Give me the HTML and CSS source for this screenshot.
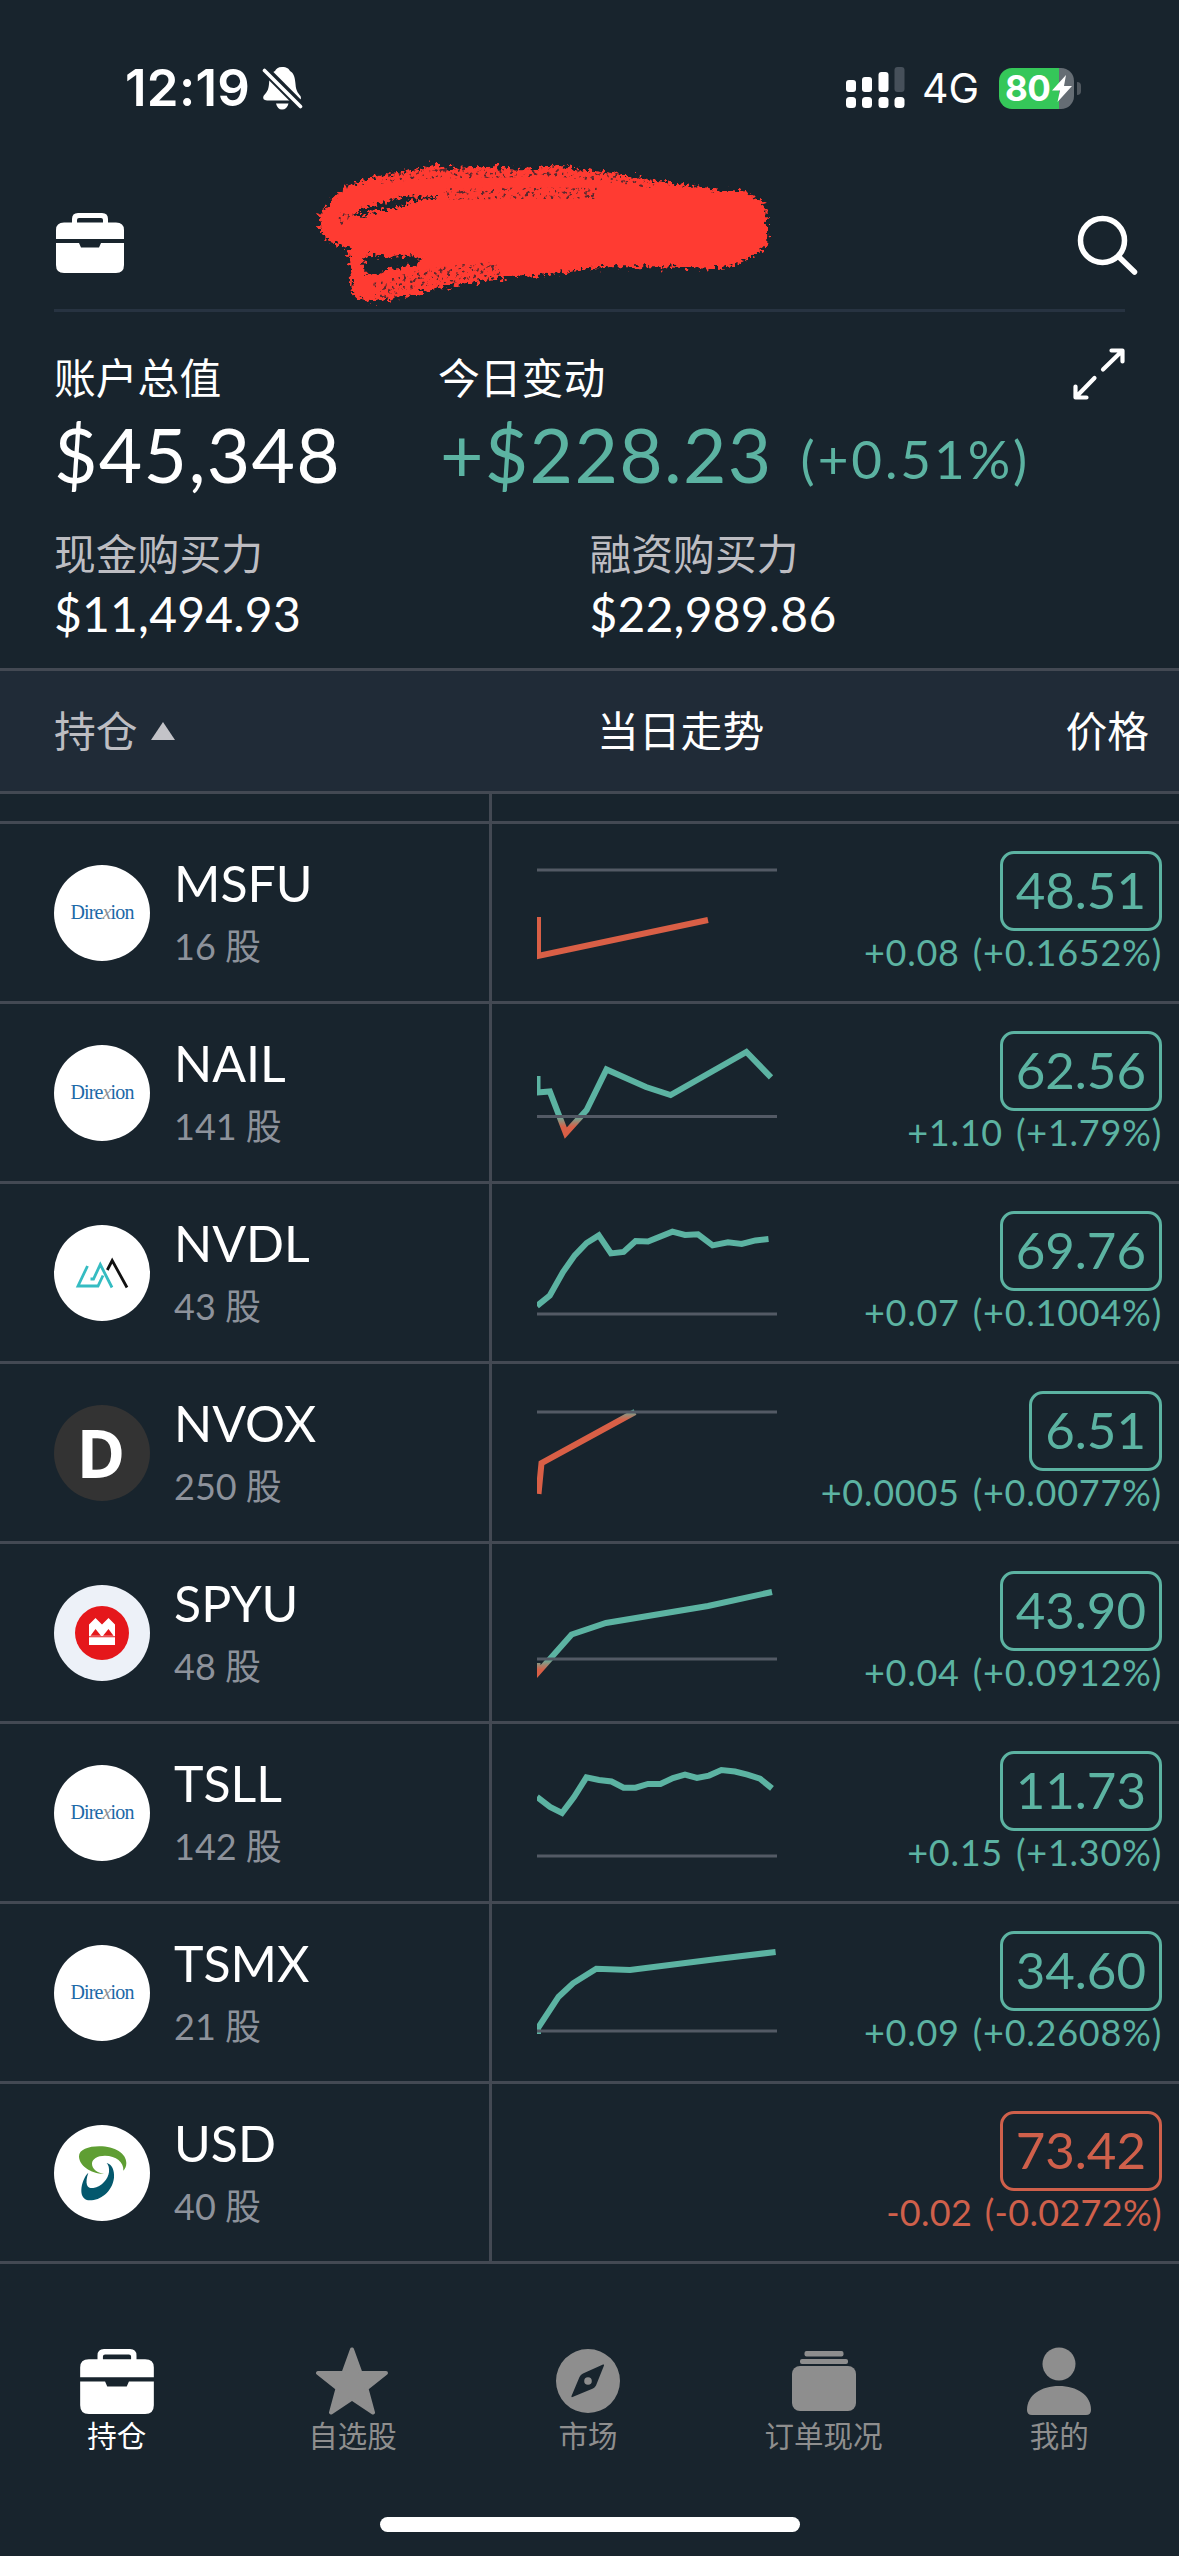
FILE: index.html
```html
<!DOCTYPE html>
<html lang="zh-CN">
<head>
<meta charset="utf-8">
<title>持仓</title>
<link rel="stylesheet" href="styles.css">
</head>
<body>
<svg class="defs" width="0" height="0">
  <defs>
    <symbol id="briefcase" viewBox="0 0 68 60">
      <path d="M0 26V17Q0 9.500 8 9.500H16V6Q16 0 22 0H46Q52 0 52 6V9.500H60Q68 9.500 68 17V26ZM21 9.500H47V7Q47 5 45 5H23Q21 5 21 7Z"/>
      <path d="M0 30H23L25 34.500H43L45 30H68V52Q68 60 60 60H8Q0 60 0 52Z"/>
    </symbol>
    <linearGradient id="fade-nail" gradientUnits="userSpaceOnUse" x1="0" y1="112" x2="0" y2="123"><stop offset="0" stop-color="#5cb3a2"/><stop offset="1" stop-color="#d95f46"/></linearGradient>
    <linearGradient id="fade-nvox" gradientUnits="userSpaceOnUse" x1="0" y1="46" x2="0" y2="56"><stop offset="0" stop-color="#5cb3a2"/><stop offset="1" stop-color="#d95f46"/></linearGradient>
    <linearGradient id="fade-spyu" gradientUnits="userSpaceOnUse" x1="0" y1="115" x2="0" y2="126"><stop offset="0" stop-color="#5cb3a2"/><stop offset="1" stop-color="#d95f46"/></linearGradient>
  </defs>
</svg>

<div class="status">
  <span class="clock">12:19</span>
  <svg class="bell" width="42" height="44" viewBox="0 0 42 44">
    <path fill="#fff" d="M20 1C25 1 27 3 28 5C32 7 33 12 33.500 18C34 25 36 27 38.500 30Q40 34 36.500 34.500H5Q0 34 1.500 30C5 26 6.500 24 7 18C7.500 11 9 7 13 5C14 3 16 1 20 1ZM14 37.500H26.500Q25 43.500 20 43.500Q15.500 43.500 14 37.500Z"/>
    <path stroke="#18242d" stroke-width="9" d="M3 4L39 40"/>
    <path stroke="#fff" stroke-width="3.600" stroke-linecap="round" d="M2.500 4.500L38.500 40.500"/>
  </svg>
  <svg class="signal" width="60" height="42" viewBox="0 0 60 42" fill="#fff">
    <rect x="0" y="13" width="10" height="12" rx="3"/><rect x="16" y="10" width="10" height="15" rx="3"/><rect x="32.500" y="5" width="10" height="20" rx="3"/><rect x="48.500" y="0" width="10" height="25" rx="3" fill="#46505a"/>
    <rect x="0" y="30" width="10" height="11" rx="3.500"/><rect x="16" y="30" width="10" height="11" rx="3.500"/><rect x="32.500" y="30" width="10" height="11" rx="3.500"/><rect x="48.500" y="30" width="10" height="11" rx="3.500"/>
  </svg>
  <span class="network">4G</span>
  <div class="battery">
    <span class="charge">80</span>
    <svg width="22" height="27" viewBox="0 0 22 27"><path fill="#fff" d="M15 0L1 15.500H9L6.500 27L21 11H13Z"/></svg>
  </div>
  <span class="nub"></span>
</div>

<header class="topbar">
  <svg class="case" width="68" height="60" fill="#fff"><use href="#briefcase"/></svg>
  <svg class="search" width="62" height="62" viewBox="0 0 62 62" fill="none" stroke="#fff" stroke-width="5.500" stroke-linecap="round"><circle cx="25.500" cy="25.500" r="22"/><path d="M42 42L57.500 57"/></svg>
  <svg class="scribble" width="470" height="170" viewBox="0 0 1410 510">
    <defs>
      <filter id="rough" x="-5%" y="-10%" width="110%" height="120%">
        <feTurbulence type="fractalNoise" baseFrequency="0.080" numOctaves="2" seed="4" result="n"/>
        <feDisplacementMap in="SourceGraphic" in2="n" scale="42" xChannelSelector="R" yChannelSelector="G"/>
      </filter>
      <filter id="grain" x="-5%" y="-20%" width="110%" height="140%">
        <feTurbulence type="fractalNoise" baseFrequency="0.090" numOctaves="2" seed="9"/>
        <feColorMatrix values="0 0 0 0 0  0 0 0 0 0  0 0 0 0 0  9 0 0 0 -5.2" result="dots"/>
        <feComposite in="SourceGraphic" in2="dots" operator="in"/>
      </filter>
    </defs>
    <path filter="url(#rough)" fill="#ff3b30" fill-rule="evenodd" d="M28 235C22 190 60 150 100 118C150 88 230 68 330 56L372 44L410 54L500 52L560 50L640 58L730 44L810 58L930 72L1040 92L1140 108L1240 124L1285 120C1330 132 1366 155 1370 185L1372 278C1355 305 1310 325 1285 346C1220 362 1130 354 1050 352L860 352L740 370L600 382L430 406L300 436L190 456C160 455 130 440 126 430L116 300C90 285 40 275 28 235ZM130 194L160 176L240 152L300 140L390 138L375 146L320 151L270 170L180 186L155 200ZM163 314L250 320L310 316L338 330L300 348L240 358L180 374L163 374Z"/>
    <g filter="url(#grain)" stroke="#18242d" stroke-width="34" fill="none" opacity=".7">
      <path d="M210 85L330 70L560 66L740 62L930 84L1040 100"/>
      <path d="M400 132L560 130L860 130"/>
      <path stroke-width="50" d="M190 425L330 385L480 365L570 362"/>
      <path d="M95 225L110 190"/>
    </g>
  </svg>
</header>
<div class="divider"></div>

<section class="summary">
  <div class="totals">
    <div class="total">
      <div class="label">账户总值</div>
      <div class="big">$45,348</div>
    </div>
    <div class="change">
      <div class="label">今日变动</div>
      <div class="big up">+$228.23<span class="pct">(+0.51%)</span></div>
    </div>
    <svg class="expand" width="52" height="52" viewBox="0 0 52 52" fill="none" stroke="#fff" stroke-width="4.200" stroke-linecap="round" stroke-linejoin="round"><path d="M30 21.500L49 3M38.500 2.500H49.500V13.500M21.500 30L3 49M2.500 38.500V49.500H13.500"/></svg>
  </div>
  <div class="powers">
    <div class="power"><div class="label dim">现金购买力</div><div class="mid">$11,494.93</div></div>
    <div class="power"><div class="label dim">融资购买力</div><div class="mid">$22,989.86</div></div>
  </div>
</section>

<div class="thead">
  <div class="sort">持仓<svg width="24" height="20" viewBox="0 0 24 20"><path fill="#c3c3c8" d="M12 1L24 19H0Z"/></svg></div>
  <div class="trend">当日走势</div>
  <div class="price-head">价格</div>
</div>

<main class="table">
  <div class="row peek"><div class="name"></div></div>

  <div class="row">
    <div class="name"><div class="logo direxion"><span>Dire<i>x</i>ion</span></div><div class="who"><div class="sym">MSFU</div><div class="shares">16 股</div></div></div>
    <svg class="spark" viewBox="0 0 240 177"><path class="dn" d="M1 93V132L171 96"/><path class="base" d="M0 46H240"/></svg>
    <div class="quote"><div class="box">48.51</div><div class="delta">+0.08 (+0.1652%)</div></div>
  </div>
  <div class="row">
    <div class="name"><div class="logo direxion"><span>Dire<i>x</i>ion</span></div><div class="who"><div class="sym">NAIL</div><div class="shares">141 股</div></div></div>
    <svg class="spark" viewBox="0 0 240 177"><path stroke="url(#fade-nail)" d="M0.500 72V88.500L12.800 87.500L28.800 129L49.600 106L69.500 65.500L109 83L133.600 91L209.400 48L234 73.400"/><path class="base" d="M0 112.500H240"/></svg>
    <div class="quote"><div class="box">62.56</div><div class="delta">+1.10 (+1.79%)</div></div>
  </div>
  <div class="row">
    <div class="name"><div class="logo"><svg width="96" height="96" viewBox="0 0 96 96" fill="none" stroke="#35bcc2" stroke-width="2.800"><path d="M33.500 41L24 61H44L49 50.500M36.500 54H39.500L46.300 39.500L58 62.500"/><path stroke="#111" d="M53.300 45L58.200 35.500L73 62.500"/></svg></div><div class="who"><div class="sym">NVDL</div><div class="shares">43 股</div></div></div>
    <svg class="spark" viewBox="0 0 240 177"><path class="up-line" d="M0 122L12.800 111.500L26 88L37.700 71.300L49.600 59L61.800 51.400L74 69.400L86.600 68L98.600 57L111 57.500L135.400 47.600L148 51L161 50.300L175.600 61.400L191 58.300L204.700 60L218.500 56.400L231.500 55"/><path class="base" d="M0 130H240"/></svg>
    <div class="quote"><div class="box">69.76</div><div class="delta">+0.07 (+0.1004%)</div></div>
  </div>
  <div class="row">
    <div class="name"><div class="logo letter">D</div><div class="who"><div class="sym">NVOX</div><div class="shares">250 股</div></div></div>
    <svg class="spark" viewBox="0 0 240 177"><path stroke="url(#fade-nvox)" d="M1.500 130L4.500 99L98 48"/><path class="base" d="M0 48H240"/></svg>
    <div class="quote"><div class="box">6.51</div><div class="delta">+0.0005 (+0.0077%)</div></div>
  </div>
  <div class="row">
    <div class="name"><div class="logo bmo"><svg width="96" height="96" viewBox="0 0 96 96"><circle cx="48" cy="48" r="27" fill="#e5171b"/><path fill="#fff" fill-rule="evenodd" d="M35 60V39.500L41.500 33L48 39.500L54.500 33L61 39.500V60ZM36.500 50.800H47L41.500 44ZM49 50.800H59.500L54.500 44ZM35 51.300V52.200H61V51.300Z"/></svg></div><div class="who"><div class="sym">SPYU</div><div class="shares">48 股</div></div></div>
    <svg class="spark" viewBox="0 0 240 177"><path stroke="url(#fade-spyu)" d="M0.500 119V129L34.600 90.500L69 79L171 62L235 48"/><path class="base" d="M0 115H240"/></svg>
    <div class="quote"><div class="box">43.90</div><div class="delta">+0.04 (+0.0912%)</div></div>
  </div>
  <div class="row">
    <div class="name"><div class="logo direxion"><span>Dire<i>x</i>ion</span></div><div class="who"><div class="sym">TSLL</div><div class="shares">142 股</div></div></div>
    <svg class="spark" viewBox="0 0 240 177"><path class="up-line" d="M0 73L13 83L25 89L37 73L49.400 53.400L62 56L74.500 57.500L86.600 63.700H98.700L111 60H123.400L136 54L148 50.600L160 54L172 51.600L184.400 46L198 47.500L210.400 50.600L223 54.700L235 64.400"/><path class="base" d="M0 132H240"/></svg>
    <div class="quote"><div class="box">11.73</div><div class="delta">+0.15 (+1.30%)</div></div>
  </div>
  <div class="row">
    <div class="name"><div class="logo direxion"><span>Dire<i>x</i>ion</span></div><div class="who"><div class="sym">TSMX</div><div class="shares">21 股</div></div></div>
    <svg class="spark" viewBox="0 0 240 177"><path class="up-line" d="M1 130V124L21.600 92.700L36 79.300L59.300 64.700L93 66L180 55L238.600 48"/><path class="base" d="M0 127H240"/></svg>
    <div class="quote"><div class="box">34.60</div><div class="delta">+0.09 (+0.2608%)</div></div>
  </div>
  <div class="row">
    <div class="name"><div class="logo"><svg width="96" height="96" viewBox="42 14 288 288"><path fill="#5f9e33" d="M192 161C150 160 117 135 117 108C117 88 145 78 178 78C225 78 259 100 259 128C259 138 255 147 250 151C252 125 228 106 195 106C172 106 156 116 156 130C156 145 170 156 192 161Z"/><path fill="#04586d" d="M200 128C216 132 224 150 222 172C217 215 180 240 150 240C133 240 123 228 124 208C125 190 133 168 145 157C140 172 138 184 141 194C144 202 152 204 160 203C185 200 205 175 207 155C208 143 206 135 200 128Z"/></svg></div><div class="who"><div class="sym">USD</div><div class="shares">40 股</div></div></div>
    <div class="spark"></div>
    <div class="quote down"><div class="box">73.42</div><div class="delta">-0.02 (-0.0272%)</div></div>
  </div>
</main>

<nav class="tabs">
  <a class="tab active"><svg viewBox="0 0 74 68"><use href="#briefcase" x="0" y="2" width="74" height="65"/></svg>持仓</a>
  <a class="tab"><svg viewBox="0 0 74 68"><path stroke="#8e8e8e" stroke-width="4" stroke-linejoin="round" d="M37 2.500L45.500 26H71L51.500 41.500L58 65.500L37 51.500L16 65.500L22.500 41.500L3 26H28.500Z"/></svg>自选股</a>
  <a class="tab"><svg viewBox="0 0 74 68"><path fill-rule="evenodd" d="M37 2A32 32 0 1 1 37 66A32 32 0 1 1 37 2ZM53 18.500Q53.500 17 52 17.500L32 26.500Q29.500 27.500 28.500 30L20.500 49Q20 50.500 21.500 50L42 41.500Q44 40.500 45 38.500ZM37 30.200A3.800 3.800 0 1 1 37 37.800A3.800 3.800 0 1 1 37 30.200Z"/></svg>市场</a>
  <a class="tab"><svg viewBox="0 0 74 68"><rect x="17.500" y="4" width="39" height="5.500" rx="2"/><rect x="13" y="12" width="48" height="5" rx="2"/><rect x="5" y="19" width="64" height="45" rx="8"/></svg>订单现况</a>
  <a class="tab"><svg viewBox="0 0 74 68"><circle cx="37" cy="17" r="16.500"/><path d="M5 63C5 48 19 39 37 39S69 48 69 63Q69 68 64 68H10Q5 68 5 63Z"/></svg>我的</a>
</nav>
<div class="home"></div>
</body>
</html>
```

FILE: styles.css
```css
* { box-sizing: border-box; }
body {
  margin: 0;
  width: 1179px;
  height: 2556px;
  background: #18242d;
  color: #fff;
  font-family: Lato, "Noto Sans CJK SC", sans-serif;
  display: flex;
  flex-direction: column;
  overflow: hidden;
}
.defs { position: absolute; }

.status {
  height: 118px;
  padding: 58px 98px 0 125px;
  display: flex;
  align-items: center;
  font-family: Inter, sans-serif;
}
.clock { font-size: 51px; font-weight: 600; line-height: 60px; width: 137px; letter-spacing: 0.300px; }
.signal { margin-left: auto; }
.network { font-size: 41px; line-height: 60px; margin-left: 16px; width: 59px; height: 60px; }
.battery {
  width: 75px;
  height: 41px;
  margin-left: 18px;
  border-radius: 13px;
  background: linear-gradient(90deg, #35c759 60px, #656d74 60px);
  display: flex;
  align-items: center;
  padding-left: 6px;
}
.charge { font-size: 35px; font-weight: 700; letter-spacing: -0.500px; width: 46px; }
.nub { width: 4px; height: 13px; margin-left: 3px; border-radius: 0 4px 4px 0; background: #50585f; }

.topbar {
  position: relative;
  height: 191px;
  padding: 95px 40px 0 56px;
  display: flex;
  justify-content: space-between;
  align-items: flex-start;
}
.search { margin-top: 2px; }
.scribble { position: absolute; left: 310px; top: 32px; }
.divider { height: 3px; margin: 0 54px; background: #273341; }

.summary { height: 356px; padding: 41px 54px 0; }
.totals { display: flex; }
.total { width: 384px; }
.expand { margin: -5px 0 0 auto; }
.label { font-size: 41.800px; line-height: 50px; }
.dim { color: #bdbdc2; }
.big { font-size: 75px; line-height: 80px; margin-top: 11px; white-space: nowrap; letter-spacing: 1.300px; }
.up { color: #5cb3a2; padding-left: 2px; }
.pct { font-size: 53px; line-height: 0; margin-left: 28px; letter-spacing: 2.900px; position: relative; top: -4px; }
.powers { display: flex; margin-top: 35px; }
.power { width: 538px; }
.mid { font-size: 48px; line-height: 56px; margin-top: 7px; letter-spacing: 0.200px; }

.thead {
  height: 126px;
  border-top: 3px solid #434953;
  border-bottom: 3px solid #434953;
  background: #202b37;
  display: flex;
  align-items: center;
  font-size: 41.800px;
  line-height: 50px;
  padding: 0 30px 0 54px;
}
.sort { width: 543px; color: #bdbdc2; display: flex; align-items: center; gap: 13px; }
.price-head { margin-left: auto; }

.row { height: 180px; display: flex; border-bottom: 3px solid #434953; }
.row.peek { height: 30px; }
.name {
  width: 492px;
  border-right: 3px solid #434953;
  padding-left: 54px;
  display: flex;
  align-items: center;
}
.logo {
  width: 96px;
  height: 96px;
  border-radius: 50%;
  background: #fff;
  display: flex;
  align-items: center;
  justify-content: center;
}
.direxion { font-family: "Liberation Serif", serif; font-size: 20px; letter-spacing: -0.850px; color: #1c69a8; }
.direxion i { color: #8b9095; }
.bmo { background: #edf1f8; }
.letter { background: #333; font: 700 66px/94px "Open Sans", sans-serif; align-items: flex-start; padding-right: 2px; }
.who { align-self: flex-start; margin: 29px 0 0 24px; }
.sym { font-size: 50px; line-height: 60px; }
.shares { font-size: 36px; line-height: 44px; margin-top: 11px; color: #8d929b; }
.spark { width: 240px; height: 177px; margin-left: 45px; fill: none; stroke-width: 6px; overflow: hidden; }
.up-line { stroke: #5cb3a2; }
.dn { stroke: #d95f46; }
.base { stroke: #535a65; stroke-width: 3px; }
.quote {
  margin-left: auto;
  padding: 27px 17px 0 0;
  display: flex;
  flex-direction: column;
  align-items: flex-end;
  color: #5cb3a2;
}
.down { color: #cf604b; }
.box {
  height: 80px;
  border: 3px solid;
  border-radius: 14px;
  padding: 0 13px;
  font-size: 51px;
  line-height: 72px;
}
.delta {
  font-size: 36px;
  line-height: 40px;
  margin-top: 1px;
  white-space: nowrap;
  letter-spacing: 0.750px;
  word-spacing: 3px;
}
.down .delta { letter-spacing: 0.300px; }

.tabs { display: flex; padding: 83px 2px 0 0; margin-left: -1px; }
.tab {
  flex: 1 1 0;
  display: flex;
  flex-direction: column;
  align-items: center;
  font-size: 29.500px;
  line-height: 36px;
  color: #8e8e8e;
  fill: #8e8e8e;
}
.tab svg { width: 74px; height: 68px; margin-bottom: 3px; }
.active { color: #fff; fill: #fff; }
.home { width: 420px; height: 15px; border-radius: 8px; background: #fff; margin: 63px auto 0; }
```
